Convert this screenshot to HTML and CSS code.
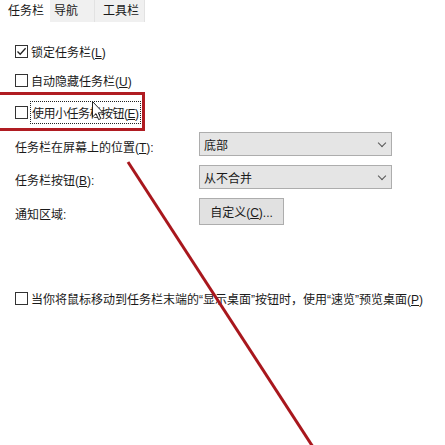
FILE: index.html
```html
<!DOCTYPE html>
<html lang="zh-CN">
<head>
    <meta charset="UTF-8">
    <title>任务栏设置</title>
    <link rel="stylesheet" href="styles.css">
</head>
<body>
    <div class="tabs">
        <div class="tab tab-active">任务栏</div>
        <div class="tab tab-nav">导航</div>
        <div class="tab tab-tools">工具栏</div>
    </div>
    <div class="panel">
        <div class="check check-first">
            <span class="box checked">
                <svg width="11" height="11" viewBox="0 0 11 11"><path d="M1.5 5.5 L4.2 8.3 L9.6 2.3" fill="none" stroke="#222" stroke-width="1.3"/></svg>
            </span>
            <span class="label">锁定任务栏(<u>L</u>)</span>
        </div>
        <div class="check check-second">
            <span class="box"></span>
            <span class="label">自动隐藏任务栏(<u>U</u>)</span>
        </div>
        <div class="check check-third">
            <span class="box"></span>
            <span class="label focus">使用小任务栏按钮(<u>E</u>)</span>
        </div>

        <div class="settings">
            <div class="field-label">任务栏在屏幕上的位置(<u>T</u>):</div>
            <div class="select">底部<span class="chevron"></span></div>
            <div class="field-label">任务栏按钮(<u>B</u>):</div>
            <div class="select">从不合并<span class="chevron"></span></div>
            <div class="field-label">通知区域:</div>
            <div><button class="btn">自定义(<u>C</u>)...</button></div>
        </div>

        <div class="check check-last">
            <span class="box"></span>
            <span class="label">当你将鼠标移动到任务栏末端的“显示桌面”按钮时，使用“速览”预览桌面(<u>P</u>)</span>
        </div>
    </div>

    <div class="mark-box"></div>
    <svg class="mark-line" width="445" height="445" viewBox="0 0 445 445">
        <line x1="128" y1="162" x2="313" y2="447" stroke="#a8171d" stroke-width="3"/>
    </svg>
    <svg class="cursor" width="13" height="20" viewBox="0 0 13 20">
        <path d="M0.5 0.5 L0.5 16 L4 12.6 L6.6 18.6 L8.8 17.6 L6.3 11.8 L11.2 11.8 Z" fill="#fff" stroke="#222" stroke-width="1"/>
    </svg>
</body>
</html>
```

FILE: styles.css
```css
body {
    margin: 0;
    width: 445px;
    height: 445px;
    overflow: hidden;
    background: #fff;
    font-family: "Liberation Sans", "Noto Sans CJK SC", sans-serif;
    font-size: 12px;
    color: #1a1a1a;
    position: relative;
}
.tabs {
    display: flex;
    height: 22px;
    padding-left: 4px;
}
.tab {
    line-height: 22px;
    background: #f0f0f0;
    border-right: 1px solid #e2e2e2;
    box-sizing: border-box;
}
.tab-active {
    background: #fff;
    width: 46px;
    padding-left: 4px;
    border-right: none;
}
.tab-nav {
    width: 45px;
    padding-left: 4px;
}
.tab-tools {
    width: 50px;
    padding-left: 8px;
}
.panel {
    padding: 0 0 0 15px;
}
.check {
    display: flex;
    align-items: center;
    gap: 3px;
    height: 22px;
}
.check-first {
    margin-top: 18px;
}
.check-second {
    margin-top: 7px;
}
.check-third {
    margin-top: 10px;
}
.check-last {
    margin-top: 62px;
}
.box {
    width: 13px;
    height: 13px;
    border: 1px solid #333;
    box-sizing: border-box;
    background: #fff;
    display: flex;
    align-items: center;
    justify-content: center;
    flex-shrink: 0;
}
.box svg {
    display: block;
}
.label {
    white-space: nowrap;
}
.focus {
    border: 1px dotted #222;
    padding: 2px 1px;
    margin-left: -1px;
    letter-spacing: -0.5px;
}
.settings {
    display: grid;
    grid-template-columns: 184px 193px;
    row-gap: 9px;
    margin-top: 9px;
    align-items: center;
}
.field-label {
    padding-top: 4px;
}
.select {
    height: 24px;
    box-sizing: border-box;
    border: 1px solid #adadad;
    background: #e5e5e5;
    padding-left: 4px;
    display: flex;
    align-items: center;
    position: relative;
}
.chevron {
    position: absolute;
    right: 6px;
    top: 7px;
    width: 5px;
    height: 5px;
    border-right: 1px solid #555;
    border-bottom: 1px solid #555;
    transform: rotate(45deg);
}
.btn {
    width: 85px;
    height: 27px;
    border: 1px solid #adadad;
    background: #e1e1e1;
    font-family: inherit;
    font-size: 12px;
    color: #1a1a1a;
    padding: 0;
    display: block;
}
.mark-box {
    position: absolute;
    left: -3px;
    top: 92px;
    width: 148px;
    height: 39px;
    border: 3px solid #b01c22;
    box-sizing: border-box;
}
.mark-line {
    position: absolute;
    left: 0;
    top: 0;
}
.cursor {
    position: absolute;
    left: 92px;
    top: 101px;
}
```
